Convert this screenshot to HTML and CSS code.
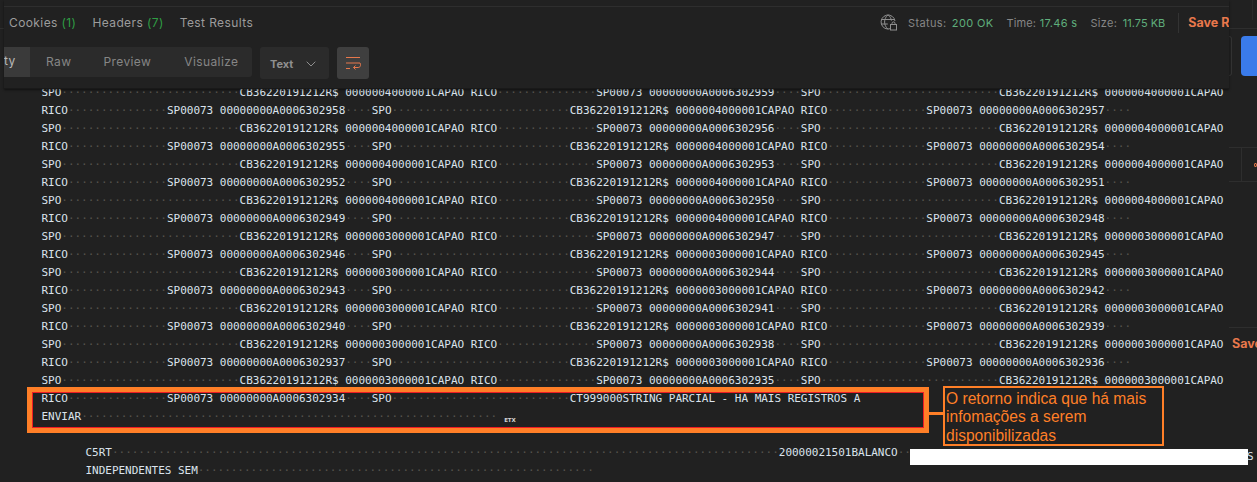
FILE: index.html
```html
<!DOCTYPE html>
<html lang="pt">
<head>
<meta charset="utf-8">
<title>Response</title>
<link rel="stylesheet" href="styles.css">
</head>
<body>
<div class="page">
  <aside class="rail-left"><div class="rail-left-line"></div></aside>
  <main class="panel">
    <header class="toolbar">
      <div class="tabs-row">
        <nav class="tabs">
          <span class="tab">Cookies <em>(1)</em></span>
          <span class="tab">Headers <em>(7)</em></span>
          <span class="tab">Test Results</span>
        </nav>
        <div class="meta">
          <svg class="globe" width="17" height="17" viewBox="0 0 17 17" fill="none" stroke="#8f8f8f" stroke-width="1">
            <path d="M10.5 14.6A7 7 0 1 1 15 7"/>
            <path d="M1.3 5.5h13M1.3 10h6.5"/>
            <path d="M8 .7C5.6 3 4.6 5.5 4.6 8s1 5 3.4 7.2M8 .7c2.2 2 3.3 4 3.4 6"/>
            <rect x="10.5" y="10.5" width="6" height="5.5" fill="#212121"/>
            <path d="M12 10.5V9.4a1.5 1.5 0 0 1 3 0v1.1"/>
          </svg>
          <span class="stat">Status: <b>200 OK</b></span>
          <span class="stat stat-time">Time: <b>17.46 s</b></span>
          <span class="stat stat-size">Size: <b>11.75 KB</b></span>
          <span class="divider"></span>
          <span class="save">Save Re</span>
        </div>
      </div>
      <div class="view-row">
        <div class="segments">
          <span class="segment segment-on">ty</span>
          <span class="segment seg-raw">Raw</span>
          <span class="segment seg-preview">Preview</span>
          <span class="segment seg-visualize">Visualize</span>
        </div>
        <div class="select">
          <span>Text</span>
          <svg width="10" height="6" viewBox="0 0 10 6" fill="none" stroke="#8f8f8f" stroke-width="1"><path d="M.7.7 5 5l4.3-4.3"/></svg>
        </div>
        <div class="wrap-btn">
          <svg width="16" height="14" viewBox="0 0 16 14" fill="none" stroke="#e8784c" stroke-width="1"><path d="M1 1.500h14M1 7h14c1.500 2.500 0 4.500-2 4.500H8.500M10.500 9.500l-2 2 2 2M1 12.500h4"/></svg>
        </div>
      </div>
    </header>
    <section class="code">
<div class="line">SPO<i>···························</i>CB36220191212R$ 0000004000001CAPAO RICO<i>···············</i>SP00073 00000000A0006302959<i>····</i>SPO<i>···························</i>CB36220191212R$ 0000004000001CAPAO</div>
<div class="line">RICO<i>···············</i>SP00073 00000000A0006302958<i>····</i>SPO<i>···························</i>CB36220191212R$ 0000004000001CAPAO RICO<i>···············</i>SP00073 00000000A0006302957<i>····</i></div>
<div class="line">SPO<i>···························</i>CB36220191212R$ 0000004000001CAPAO RICO<i>···············</i>SP00073 00000000A0006302956<i>····</i>SPO<i>···························</i>CB36220191212R$ 0000004000001CAPAO</div>
<div class="line">RICO<i>···············</i>SP00073 00000000A0006302955<i>····</i>SPO<i>···························</i>CB36220191212R$ 0000004000001CAPAO RICO<i>···············</i>SP00073 00000000A0006302954<i>····</i></div>
<div class="line">SPO<i>···························</i>CB36220191212R$ 0000004000001CAPAO RICO<i>···············</i>SP00073 00000000A0006302953<i>····</i>SPO<i>···························</i>CB36220191212R$ 0000004000001CAPAO</div>
<div class="line">RICO<i>···············</i>SP00073 00000000A0006302952<i>····</i>SPO<i>···························</i>CB36220191212R$ 0000004000001CAPAO RICO<i>···············</i>SP00073 00000000A0006302951<i>····</i></div>
<div class="line">SPO<i>···························</i>CB36220191212R$ 0000004000001CAPAO RICO<i>···············</i>SP00073 00000000A0006302950<i>····</i>SPO<i>···························</i>CB36220191212R$ 0000004000001CAPAO</div>
<div class="line">RICO<i>···············</i>SP00073 00000000A0006302949<i>····</i>SPO<i>···························</i>CB36220191212R$ 0000004000001CAPAO RICO<i>···············</i>SP00073 00000000A0006302948<i>····</i></div>
<div class="line">SPO<i>···························</i>CB36220191212R$ 0000003000001CAPAO RICO<i>···············</i>SP00073 00000000A0006302947<i>····</i>SPO<i>···························</i>CB36220191212R$ 0000003000001CAPAO</div>
<div class="line">RICO<i>···············</i>SP00073 00000000A0006302946<i>····</i>SPO<i>···························</i>CB36220191212R$ 0000003000001CAPAO RICO<i>···············</i>SP00073 00000000A0006302945<i>····</i></div>
<div class="line">SPO<i>···························</i>CB36220191212R$ 0000003000001CAPAO RICO<i>···············</i>SP00073 00000000A0006302944<i>····</i>SPO<i>···························</i>CB36220191212R$ 0000003000001CAPAO</div>
<div class="line">RICO<i>···············</i>SP00073 00000000A0006302943<i>····</i>SPO<i>···························</i>CB36220191212R$ 0000003000001CAPAO RICO<i>···············</i>SP00073 00000000A0006302942<i>····</i></div>
<div class="line">SPO<i>···························</i>CB36220191212R$ 0000003000001CAPAO RICO<i>···············</i>SP00073 00000000A0006302941<i>····</i>SPO<i>···························</i>CB36220191212R$ 0000003000001CAPAO</div>
<div class="line">RICO<i>···············</i>SP00073 00000000A0006302940<i>····</i>SPO<i>···························</i>CB36220191212R$ 0000003000001CAPAO RICO<i>···············</i>SP00073 00000000A0006302939<i>····</i></div>
<div class="line">SPO<i>···························</i>CB36220191212R$ 0000003000001CAPAO RICO<i>···············</i>SP00073 00000000A0006302938<i>····</i>SPO<i>···························</i>CB36220191212R$ 0000003000001CAPAO</div>
<div class="line">RICO<i>···············</i>SP00073 00000000A0006302937<i>····</i>SPO<i>···························</i>CB36220191212R$ 0000003000001CAPAO RICO<i>···············</i>SP00073 00000000A0006302936<i>····</i></div>
<div class="line">SPO<i>···························</i>CB36220191212R$ 0000003000001CAPAO RICO<i>···············</i>SP00073 00000000A0006302935<i>····</i>SPO<i>···························</i>CB36220191212R$ 0000003000001CAPAO</div>
<div class="line">RICO<i>···············</i>SP00073 00000000A0006302934<i>····</i>SPO<i>···························</i>CT999000STRING PARCIAL - HA MAIS REGISTROS A</div>
<div class="line">ENVIAR<i>··········</i><i>··········</i><i>··········</i><i>··········</i><i>··········</i><i>··········</i><i>···</i><span class="etx">ETX</span></div>
<div class="line"></div>
<div class="line line-indent">C5RT<i>·····································································································</i>20000021501BALANCO<i>··</i></div>
<div class="line line-indent">INDEPENDENTES SEM<i>··········</i><i>··········</i><i>··········</i><i>··········</i><i>··········</i><i>··········</i></div>
    </section>
  </main>
  <aside class="rail-right">
    <div class="rail-top"><span class="rail-tick"></span></div>
    <div class="rail-controls"><span class="rail-ghost"></span><span class="rail-blue"></span></div>
    <div class="rail-item"><span class="rail-bar"></span><span class="rail-dot"></span></div>
    <div class="rail-save">Save</div>
  </aside>
</div>
<div class="mark-box"></div>
<div class="mark-link"></div>
<div class="mark-note">O retorno indica que há mais infomações a serem disponibilizadas</div>
<div class="redaction"></div>
<div class="redaction-tail">S</div>
</body>
</html>
```
FILE: styles.css
```css
* { box-sizing: border-box; }
html, body { margin: 0; height: 482px; overflow: hidden; background: #212121; }
body { position: relative; font-family: Inter, "Noto Sans", sans-serif; }

.page { display: grid; grid-template-columns: 4px 1225px 28px; height: 482px; }

.rail-left { padding-top: 28px; }
.rail-left-line { height: 1px; background: #2e2e2e; }

.panel { min-width: 0; display: flex; flex-direction: column; }
.toolbar {
  position: relative; z-index: 2; height: 89px; flex: none; overflow: hidden;
  background: #212121; border-bottom: 1px solid #191919;
  box-shadow: 0 1px 2px rgba(0,0,0,.5);
}
.tabs-row {
  height: 32px; margin-top: 6px; padding: 0 0 0 5px;
  display: flex; align-items: center; justify-content: space-between;
  border-top: 1px solid #2e2e2e; white-space: nowrap;
}
.tabs { display: flex; gap: 16px; margin-top: -1px; }
.tab { font-size: 12px; letter-spacing: .4px; color: #9c9c9c; }
.tab em { font-style: normal; color: #2f9e44; }
.meta { display: flex; align-items: center; width: 349px; flex: none; overflow: hidden; }
.globe { margin-right: 11px; flex: none; }
.stat { font-size: 11px; letter-spacing: .35px; color: #868686; margin-right: 13px; }
.stat b { font-weight: 400; color: #5fae7c; margin-left: 2px; }
.stat-time { letter-spacing: .1px; }
.stat-time b { margin-left: .5px; letter-spacing: .35px; }
.stat-size b { letter-spacing: 0; }
.divider { width: 1px; height: 20px; background: #333; margin: 0 9px 0 0; flex: none; }
.save { font-size: 12.500px; font-weight: 700; color: #e8784c; }

.view-row { display: flex; align-items: flex-start; margin-top: 9px; white-space: nowrap; }
.segments { width: 248px; height: 30px; padding-bottom: 2px; background: #2b2b2b; border-radius: 0 3px 3px 0; display: flex; align-items: center; }
.segment { font-size: 12px; letter-spacing: .4px; color: #868686; }
.segment-on { width: 26px; height: 30px; margin-bottom: -2px; line-height: 28px; background: #3a3a3a; color: #b8b8b8; text-align: left; }
.seg-raw { margin-left: 16px; }
.seg-preview { margin-left: 32px; }
.seg-visualize { margin-left: 33px; }
.select {
  width: 69px; height: 32px; margin-left: 8px; padding: 1px 13px 0 10px;
  background: #2b2b2b; border-radius: 3px; display: flex; align-items: center; justify-content: space-between;
  font-size: 11px; font-weight: 700; color: #8f8f8f;
}
.wrap-btn {
  width: 32px; height: 32px; margin-left: 8px; background: #3f3f3f; border-radius: 3px;
  display: flex; align-items: center; justify-content: center;
}

.code { flex: 1; margin-top: -5px; padding-left: 37.500px; font: 11px/18px "DejaVu Sans Mono", monospace; letter-spacing: -.02px; color: #dbe3ec; }
.line { height: 18px; white-space: pre; }
.line-indent { padding-left: 44px; }
.line i { font-style: normal; color: #56534d; }
.etx { margin-left: 7px; font: 700 5.500px/8px "DejaVu Sans", sans-serif; color: #d4d4d4; vertical-align: -2px; }

.rail-right { position: relative; min-width: 0; overflow: hidden; }
.rail-top { height: 29px; border-bottom: 1px solid #2e2e2e; }
.rail-tick { display: block; width: 1px; height: 20px; margin-left: 23px; background: #2a2a2a; }
.rail-controls { display: flex; gap: 9px; margin-top: 7px; height: 40px; }
.rail-ghost { width: 4px; height: 40px; border: 1px solid #333; border-left: 0; border-radius: 0 3px 3px 0; }
.rail-blue { width: 20px; height: 40px; background: #3a7bea; border-radius: 4px 0 0 4px; }
.rail-item {
  height: 35px; margin-top: 71px; border: solid #2e2e2e; border-width: 1px 0;
  display: flex; align-items: center;
}
.rail-bar { width: 1px; height: 33px; margin-left: 12px; background: #2e2e2e; }
.rail-dot { width: 4px; height: 4px; margin-left: 13px; border: 1px solid #e8784c; border-radius: 50%; }
.rail-save {
  margin-top: 145px; padding: 8px 0 0 3px; border-top: 1px solid #2e2e2e;
  font-size: 12.500px; font-weight: 700; color: #e8784c;
}

.mark-box { position: absolute; left: 27px; top: 387px; width: 902px; height: 46px; border: 5px solid #ff7f27; box-shadow: inset 0 0 0 1px #ed1c24; }
.mark-link { position: absolute; left: 929px; top: 412px; width: 14px; height: 3px; background: #ff7f27; }
.mark-note {
  position: absolute; left: 943px; top: 386px; width: 221px; height: 60px; padding: 2px 0 0 1px;
  border: 2px solid #ff7f27; font: 15.600px/18.300px "Liberation Sans", Arial, sans-serif; color: #ff7f27;
}
.redaction { position: absolute; left: 910px; top: 449px; width: 338px; height: 16px; background: #fff; }
.redaction-tail { position: absolute; left: 1247px; top: 448px; font: 11px/18px "DejaVu Sans Mono", monospace; color: #dbe3ec; }
```
